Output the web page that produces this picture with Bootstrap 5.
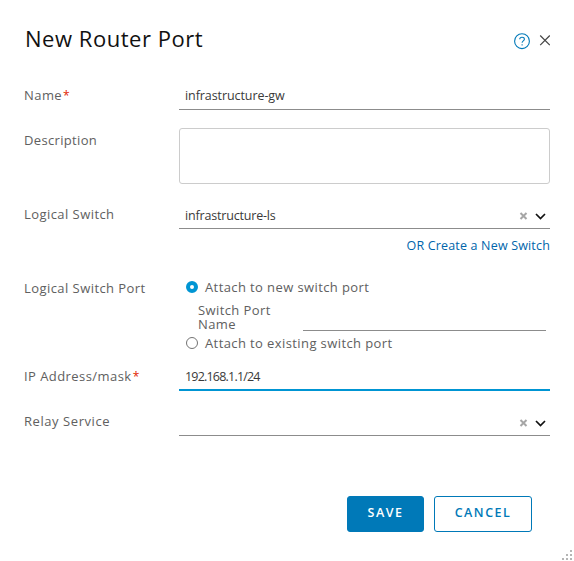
<!DOCTYPE html>
<html lang="en">
<head>
<meta charset="utf-8">
<meta name="viewport" content="width=device-width, initial-scale=1">
<title>New Router Port</title>
<link href="https://cdn.jsdelivr.net/npm/bootstrap@5.3.0/dist/css/bootstrap.min.css" rel="stylesheet">
<style>
body{font-family:Metropolis,"Open Sans","Noto Sans",sans-serif;font-size:13px;line-height:18px;color:#606060;background:#fff}
.dialog-box{height:561px;padding:23px 24px 0;overflow:hidden}
.dialog-head{height:62px;padding-left:1px}
.dialog-title{font-size:22px;line-height:30px;color:#111;letter-spacing:.53px;font-weight:400}
.head-icons{margin-top:9px}
.field-label{width:155px;flex:none;letter-spacing:.44px;padding-top:1px}
.row-desc .field-label{padding-top:3px;letter-spacing:.34px}
.row-relay .field-label{letter-spacing:.56px}
.req{color:#e12200;font-size:12px;margin-left:1px}
.line-field{height:25px;border:0;border-bottom:1px solid #8c8c8c;border-radius:0;padding:0 6px 3px;color:#3a3a3a;font-size:12.5px;background:#fff;width:100%;outline:0;letter-spacing:-.08px}
.pick-field{padding:0 3px 1px 6px;letter-spacing:-.18px}
.line-field.is-active{border-bottom:2px solid #0095d3;padding-bottom:2px;letter-spacing:-.8px}
.desc-area{height:56px;border:1px solid #ccc;border-radius:3px;resize:none;width:100%;display:block}
.row-name{height:43px}.row-desc{height:76px}.row-switch{height:25px}
.row-link{height:49px;padding-top:7px}
.row-port{height:88px}
.row-ip{height:45px}.row-relay{height:85px}
.new-switch{color:#0065ab;font-size:12.5px;letter-spacing:.17px}
.opt{gap:7px;height:20px;padding-left:7px;letter-spacing:.4px}
.opt span{margin-top:-3px}
.opt .form-check-input{width:12px;height:12px;margin:-2px 0 0;border-color:#737373;box-shadow:none;flex:none}
.opt .form-check-input:checked{background:#fff;border:4px solid #0095d3}
.sub-field{height:36px;padding-left:19px;padding-right:4px}
.sub-label{width:105px;flex:none;line-height:14px;letter-spacing:.4px;padding-top:5px}
.dlg-actions{gap:10px;padding-right:18px}
.dlg-btn{height:36px;font-size:12.5px;line-height:16px;font-weight:600;letter-spacing:1.5px;border-radius:3px;padding:0 0 3px;--bs-btn-border-color:#0079b8;--bs-btn-color:#0079b8}
.dlg-btn.save{width:77px;--bs-btn-bg:#0079b8;--bs-btn-color:#fff}
.dlg-btn.cancel{width:98px}
.grip{right:1px;bottom:0}
</style>
</head>
<body>
<div class="dialog-box position-relative">
  <div class="dialog-head d-flex justify-content-between align-items-start">
    <h1 class="dialog-title m-0">New Router Port</h1>
    <svg width="40" height="18" viewBox="0 0 40 18" fill="none" class="head-icons">
      <circle cx="12" cy="9.2" r="7.4" stroke="#0079b8" stroke-width="1.1"/>
      <path d="M9.7 7.3C9.8 5.8 10.7 5.3 12 5.3c1.4 0 2.4.7 2.4 1.9 0 1.7-2.3 1.8-2.3 3.6M12.1 12.3v1.3" stroke="#0079b8" stroke-width="1.1"/>
      <path d="M30.2 3.5l9.6 9.6M39.8 3.5l-9.6 9.6" stroke="#454545" stroke-width="1.2"/>
    </svg>
  </div>
  <form>
    <div class="row-name d-flex">
      <label class="field-label" for="n">Name<span class="req">*</span></label>
      <input id="n" class="line-field" value="infrastructure-gw">
    </div>
    <div class="row-desc d-flex">
      <label class="field-label" for="d">Description</label>
      <textarea id="d" class="desc-area"></textarea>
    </div>
    <div class="row-switch d-flex">
      <label class="field-label">Logical Switch</label>
      <div class="line-field pick-field d-flex align-items-center justify-content-between">
        <span>infrastructure-ls</span>
        <svg width="28" height="10" viewBox="0 0 28 10" fill="none"><path d="M1.5 2l6 6M7.5 2l-6 6" stroke="#a6a6a6" stroke-width="2"/><path d="M17 3l4.5 4.5L26 3" stroke="#111" stroke-width="1.7"/></svg>
      </div>
    </div>
    <div class="row-link text-end"><a class="new-switch text-decoration-none" href="#">OR Create a New Switch</a></div>
    <div class="row-port d-flex">
      <div class="field-label">Logical Switch Port</div>
      <div class="flex-fill">
        <label class="opt d-flex align-items-center"><input type="radio" class="form-check-input" name="p" checked><span>Attach to new switch port</span></label>
        <div class="sub-field d-flex">
          <label class="sub-label" for="pn">Switch Port Name</label>
          <input id="pn" class="line-field mt-2">
        </div>
        <label class="opt d-flex align-items-center"><input type="radio" class="form-check-input" name="p"><span>Attach to existing switch port</span></label>
      </div>
    </div>
    <div class="row-ip d-flex">
      <label class="field-label" for="ip">IP Address/mask<span class="req">*</span></label>
      <input id="ip" class="line-field is-active" value="192.168.1.1/24">
    </div>
    <div class="row-relay d-flex">
      <label class="field-label">Relay Service</label>
      <div class="line-field pick-field d-flex align-items-center justify-content-end">
        <svg width="28" height="10" viewBox="0 0 28 10" fill="none"><path d="M1.5 2l6 6M7.5 2l-6 6" stroke="#a6a6a6" stroke-width="2"/><path d="M17 3l4.5 4.5L26 3" stroke="#111" stroke-width="1.7"/></svg>
      </div>
    </div>
    <div class="dlg-actions d-flex justify-content-end">
      <button type="button" class="btn dlg-btn save">SAVE</button>
      <button type="button" class="btn dlg-btn cancel">CANCEL</button>
    </div>
  </form>
  <svg class="grip position-absolute" width="11" height="11" viewBox="0 0 11 11" fill="#b5b5b5"><path d="M8 0h2v2H8zM4 4h2v2H4zM8 4h2v2H8zM0 8h2v2H0zM4 8h2v2H4zM8 8h2v2H8z"/></svg>
</div>
<script src="https://cdn.jsdelivr.net/npm/bootstrap@5.3.0/dist/js/bootstrap.bundle.min.js"></script>
</body>
</html>
